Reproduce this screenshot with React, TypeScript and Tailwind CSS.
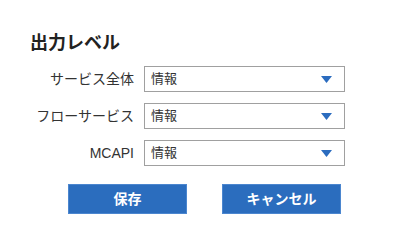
const font = { fontFamily: '"Liberation Sans", "Noto Sans CJK JP", sans-serif' };

const rows = ['サービス全体', 'フローサービス', 'MCAPI'];

function Select() {
  return (
    <div className="flex h-[26px] w-[201px] items-center justify-between border border-[#a0a0a0] bg-white pl-[6px] pr-[12px]">
      <span className="text-[13px] text-[#333]">情報</span>
      <svg width="11" height="7" viewBox="0 0 11 7">
        <polygon points="0,0 11,0 5.5,7" fill="#2b6cbf" />
      </svg>
    </div>
  );
}

export default function App() {
  return (
    <div className="h-[245px] w-[409px] bg-white pl-[30px] pt-[31px] text-[#222]" style={font}>
      <h1 className="text-[18px] font-bold leading-[24px]">出力レベル</h1>
      <div className="mt-[11px] flex flex-col gap-[11px]">
        {rows.map(r => (
          <div key={r} className="flex items-center">
            <div className="w-[114px] whitespace-nowrap pr-[10px] text-right text-[14px] text-[#333]">{r}</div>
            <Select />
          </div>
        ))}
      </div>
      <div className="mt-[18px] flex gap-[35px] pl-[38px]">
        <button className="h-[30px] w-[119px] border border-[#4b86cf] bg-[#2b6dbe] text-[14px] font-bold text-white">保存</button>
        <button className="h-[30px] w-[119px] border border-[#4b86cf] bg-[#2b6dbe] text-[14px] font-bold text-white">キャンセル</button>
      </div>
    </div>
  );
}
